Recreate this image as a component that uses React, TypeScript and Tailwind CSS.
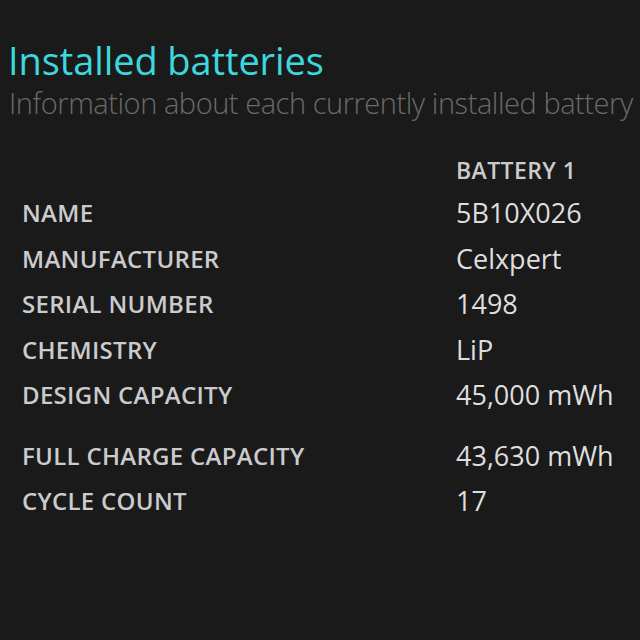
import React from "react";

const rows: [string, string, string?][] = [
  ["NAME", "5B10X026"],
  ["MANUFACTURER", "Celxpert"],
  ["SERIAL NUMBER", "1498"],
  ["CHEMISTRY", "LiP"],
  ["DESIGN CAPACITY", "45,000 mWh", "mb"],
  ["FULL CHARGE CAPACITY", "43,630 mWh"],
  ["CYCLE COUNT", "17"],
];

export default function App() {
  return (
    <div
      className="w-[640px] h-[640px] bg-[#1a1a1a] overflow-hidden pt-[36px]"
      style={{ fontFamily: '"Open Sans", "Noto Sans", sans-serif' }}
    >
      <div className="pl-[8px] text-[38px] leading-[49px] text-[#3bd8df] tracking-[-0.1px]">
        Installed batteries
      </div>
      <div className="pl-[9px] text-[29px] leading-[36px] font-light text-[#6a6a6a] tracking-[-0.45px] whitespace-nowrap">
        Information about each currently installed battery
      </div>
      <div className="grid grid-cols-[434px_1fr] pl-[22px] mt-[35px]">
        <div />
        <div className="text-[23px] font-semibold text-[#cacbcd] leading-[28px] mb-[13px] tracking-[0.4px]">
          BATTERY 1
        </div>
        {rows.map(([k, v, m]) => (
          <React.Fragment key={k}>
            <div
              className={`text-[24px] font-semibold text-[#cacbcd] leading-[32px] h-[45.5px] tracking-[0.3px] ${
                m ? "mb-[15px]" : ""
              }`}
            >
              {k}
            </div>
            <div
              className={`text-[27px] text-[#dedede] leading-[32px] h-[45.5px] ${
                m ? "mb-[15px]" : ""
              }`}
            >
              {v}
            </div>
          </React.Fragment>
        ))}
      </div>
    </div>
  );
}
